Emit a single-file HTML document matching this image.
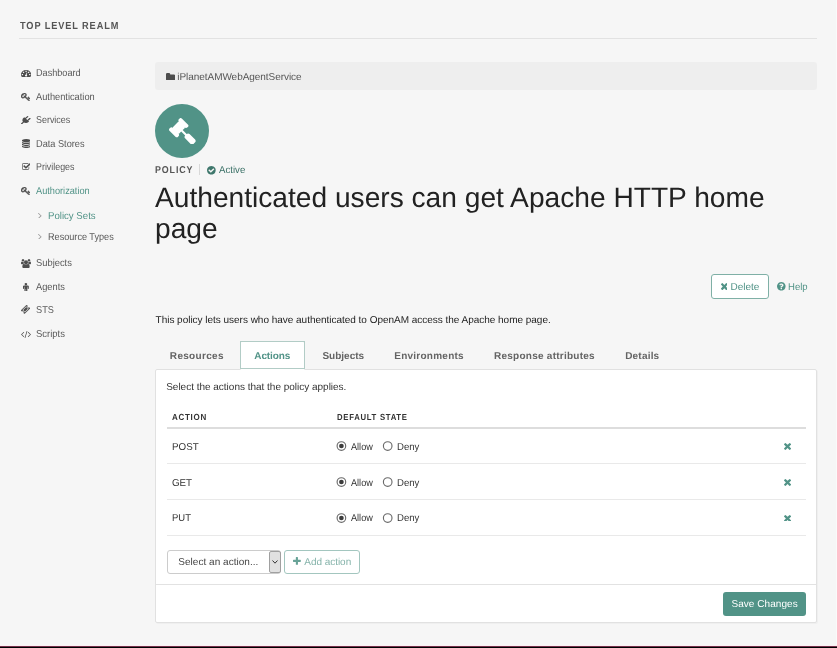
<!DOCTYPE html>
<html><head><meta charset="utf-8"><title>Policy</title>
<style>
*{box-sizing:border-box}
html,body{margin:0;padding:0}
body{width:837px;height:648px;overflow:hidden;background:#f6f6f6;font-family:"Liberation Sans",sans-serif;font-size:10px;color:#333;position:relative;text-rendering:geometricPrecision}
#page{position:absolute;left:0;top:0;width:837px;height:648px;overflow:hidden;will-change:transform}
.a{position:absolute}
.t{position:absolute;white-space:nowrap;line-height:1;transform-origin:0 0}
svg{position:absolute;display:block}
h1{margin:0;font-weight:normal}
a.t{text-decoration:none;cursor:pointer}
</style></head><body><div id="page">
<div class="a" style="left:19px;top:38px;width:798px;height:1px;background:#e2e2e2"></div>
<div class="a" style="left:155px;top:62px;width:662px;height:28px;background:#eeeeee;border-radius:3px"></div>
<div class="a" style="left:155.3px;top:104.2px;width:53.8px;height:53.8px;border-radius:50%;background:#519387"></div>
<div class="a" style="left:199.4px;top:164px;width:1px;height:11px;background:#d8d8d8"></div>
<div class="a" style="left:711px;top:274px;width:58px;height:25px;border:1px solid #7fb0a6;border-radius:3px;background:#fff"></div>
<div class="a" style="left:155px;top:369px;width:662px;height:254px;background:#fff;border:1px solid #e1e1e1;border-radius:2px;box-shadow:1px 1px 0 #efefef"></div>
<div class="a" style="left:240px;top:341px;width:65px;height:29px;border:1px solid #ddd;border-bottom:1px solid #fff;background:#fff;border-radius:2px 2px 0 0"></div>
<div class="a" style="left:240px;top:341px;width:65px;height:28px;border:1px solid #b2ccc6"></div>
<div class="a" style="left:166.5px;top:427px;width:639.5px;height:2px;background:#dddddd"></div>
<div class="a" style="left:166.5px;top:463.4px;width:639.5px;height:1px;background:#e9e9e9"></div>
<div class="a" style="left:166.5px;top:498.9px;width:639.5px;height:1px;background:#e9e9e9"></div>
<div class="a" style="left:166.5px;top:534.7px;width:639.5px;height:1px;background:#e9e9e9"></div>
<svg style="left:335px;top:439.4px;width:60px;height:14px" viewBox="0 0 60 14"><circle cx="6.4" cy="7" r="4.3" fill="#fff" stroke="#6a6a6a" stroke-width="1.15"/><circle cx="6.4" cy="7" r="2.35" fill="#3c3c3c"/><circle cx="52.7" cy="7" r="4.3" fill="#fff" stroke="#6a6a6a" stroke-width="1.15"/></svg>
<svg style="left:335px;top:475.1px;width:60px;height:14px" viewBox="0 0 60 14"><circle cx="6.4" cy="7" r="4.3" fill="#fff" stroke="#6a6a6a" stroke-width="1.15"/><circle cx="6.4" cy="7" r="2.35" fill="#3c3c3c"/><circle cx="52.7" cy="7" r="4.3" fill="#fff" stroke="#6a6a6a" stroke-width="1.15"/></svg>
<svg style="left:335px;top:510.8px;width:60px;height:14px" viewBox="0 0 60 14"><circle cx="6.4" cy="7" r="4.3" fill="#fff" stroke="#6a6a6a" stroke-width="1.15"/><circle cx="6.4" cy="7" r="2.35" fill="#3c3c3c"/><circle cx="52.7" cy="7" r="4.3" fill="#fff" stroke="#6a6a6a" stroke-width="1.15"/></svg>
<div class="a" style="left:166.5px;top:550px;width:114.5px;height:23.5px;border:1px solid #ccc;border-radius:3px;background:#fff"></div>
<div class="a" style="left:269px;top:550.5px;width:11.6px;height:22.4px;border:1px solid #a0a0a0;border-radius:2px;background:#e1e1e1"></div>
<svg style="left:271.8px;top:559.5px;width:6px;height:4px" viewBox="0 0 6 4"><path d="M0.5 0.5 L3 3.2 L5.5 0.5" fill="none" stroke="#333" stroke-width="1"/></svg>
<div class="a" style="left:284.3px;top:550px;width:75.7px;height:23.5px;border:1px solid #a3c6bf;border-radius:3px;background:#fff"></div>
<div class="a" style="left:156px;top:584px;width:660px;height:1px;background:#e2e2e2"></div>
<div class="a" style="left:723px;top:592px;width:83px;height:23.7px;background:#519387;border-radius:3px"></div>
<div class="a" style="left:836px;top:0;width:1px;height:645px;background:#fafafa"></div>
<div class="a" style="left:0;top:645px;width:837px;height:1px;background:#fbf1f4"></div>
<div class="a" style="left:0;top:646px;width:837px;height:1px;background:#74304a"></div>
<div class="a" style="left:0;top:647px;width:837px;height:1px;background:#000"></div>
<h1 class="a" style="left:155px;top:183.2px;width:662px;font-size:28.15px;line-height:30.4px;color:#222">Authenticated users can get Apache HTTP home page</h1>
<svg style="left:20.90px;top:69.80px;width:10.20px;height:7.20px" viewBox="0 256 1792 1408" preserveAspectRatio="none"><path fill="#4d4d4d" transform="translate(0,1536) scale(1,-1)" d="M384 384q0 53 -37.500 90.500t-90.500 37.500t-90.500 -37.500t-37.500 -90.500t37.500 -90.500t90.500 -37.500t90.500 37.500t37.500 90.500zM576 832q0 53 -37.500 90.500t-90.500 37.500t-90.500 -37.500t-37.500 -90.500t37.500 -90.500t90.500 -37.500t90.500 37.500t37.500 90.500zM1004 351l101 382 q6 26 -7.500 48.500t-38.500 29.500t-48 -6.500t-30 -39.500l-101 -382q-60 -5 -107 -43.500t-63 -98.500q-20 -77 20 -146t117 -89t146 20t89 117q16 60 -6 117t-72 91zM1664 384q0 53 -37.500 90.500t-90.500 37.500t-90.500 -37.500t-37.500 -90.500t37.500 -90.500t90.500 -37.500t90.500 37.500 t37.500 90.500zM1024 1024q0 53 -37.500 90.500t-90.500 37.500t-90.500 -37.500t-37.500 -90.500t37.500 -90.500t90.500 -37.500t90.500 37.500t37.500 90.500zM1472 832q0 53 -37.500 90.500t-90.500 37.500t-90.500 -37.500t-37.500 -90.500t37.500 -90.500t90.500 -37.500t90.500 37.500t37.500 90.500zM1792 384 q0 -261 -141 -483q-19 -29 -54 -29h-1402q-35 0 -54 29q-141 221 -141 483q0 182 71 348t191 286t286 191t348 71t348 -71t286 -191t191 -286t71 -348z"/></svg>
<svg style="left:21.10px;top:92.90px;width:9.10px;height:8.00px" viewBox="0 128 1683 1592" preserveAspectRatio="none"><path fill="#4d4d4d" stroke="#4d4d4d" stroke-width="70" transform="translate(0,1536) scale(1,-1)" d="M832 1024q0 80 -56 136t-136 56t-136 -56t-56 -136q0 -42 19 -83q-41 19 -83 19q-80 0 -136 -56t-56 -136t56 -136t136 -56t136 56t56 136q0 42 -19 83q41 -19 83 -19q80 0 136 56t56 136zM1683 320q0 -17 -49 -66t-66 -49q-9 0 -28.500 16t-36.500 33t-38.500 40t-24.500 26 l-96 -96l220 -220q28 -28 28 -68q0 -42 -39 -81t-81 -39q-40 0 -68 28l-671 671q-176 -131 -365 -131q-163 0 -265.500 102.500t-102.500 265.500q0 160 95 313t248 248t313 95q163 0 265.500 -102.500t102.500 -265.500q0 -189 -131 -365l355 -355l96 96q-3 3 -26 24.500t-40 38.500t-33 36.500 t-16 28.500q0 17 49 66t66 49q13 0 23 -10q6 -6 46 -44.500t82 -79.500t86.500 -86t73 -78t28.500 -41z"/></svg>
<svg style="left:21.20px;top:116.20px;width:9.60px;height:8.30px" viewBox="0 0 1792 1792" preserveAspectRatio="none"><path fill="#4d4d4d" transform="translate(0,1536) scale(1,-1)" d="M1755 1083q37 -38 37 -90.500t-37 -90.500l-401 -400l150 -150l-160 -160q-163 -163 -389.500 -186.500t-411.500 100.500l-362 -362h-181v181l362 362q-124 185 -100.500 411.500t186.500 389.500l160 160l150 -150l400 401q38 37 91 37t90 -37t37 -90.500t-37 -90.500l-400 -401l234 -234 l401 400q38 37 91 37t90 -37z"/></svg>
<svg style="left:21.50px;top:139.30px;width:8.50px;height:8.90px" viewBox="0 0 1536 1792" preserveAspectRatio="none"><path fill="#4d4d4d" transform="translate(0,1536) scale(1,-1)" d="M768 768q237 0 443 43t325 127v-170q0 -69 -103 -128t-280 -93.500t-385 -34.500t-385 34.500t-280 93.500t-103 128v170q119 -84 325 -127t443 -43zM768 0q237 0 443 43t325 127v-170q0 -69 -103 -128t-280 -93.500t-385 -34.500t-385 34.500t-280 93.500t-103 128v170q119 -84 325 -127 t443 -43zM768 384q237 0 443 43t325 127v-170q0 -69 -103 -128t-280 -93.500t-385 -34.500t-385 34.500t-280 93.500t-103 128v170q119 -84 325 -127t443 -43zM768 1536q208 0 385 -34.500t280 -93.500t103 -128v-128q0 -69 -103 -128t-280 -93.500t-385 -34.500t-385 34.500t-280 93.500 t-103 128v128q0 69 103 128t280 93.500t385 34.500z"/></svg>
<svg style="left:21.50px;top:163.00px;width:8.50px;height:7.00px" viewBox="0 128 1663 1408" preserveAspectRatio="none"><path fill="#4d4d4d" transform="translate(0,1536) scale(1,-1)" d="M1408 606v-318q0 -119 -84.500 -203.500t-203.500 -84.500h-832q-119 0 -203.500 84.500t-84.500 203.500v832q0 119 84.500 203.500t203.500 84.500h832q63 0 117 -25q15 -7 18 -23q3 -17 -9 -29l-49 -49q-10 -10 -23 -10q-3 0 -9 2q-23 6 -45 6h-832q-66 0 -113 -47t-47 -113v-832 q0 -66 47 -113t113 -47h832q66 0 113 47t47 113v254q0 13 9 22l64 64q10 10 23 10q6 0 12 -3q20 -8 20 -29zM1639 1095l-814 -814q-24 -24 -57 -24t-57 24l-430 430q-24 24 -24 57t24 57l110 110q24 24 57 24t57 -24l263 -263l647 647q24 24 57 24t57 -24l110 -110 q24 -24 24 -57t-24 -57z"/></svg>
<svg style="left:21.10px;top:186.70px;width:9.10px;height:8.00px" viewBox="0 128 1683 1592" preserveAspectRatio="none"><path fill="#4d4d4d" stroke="#4d4d4d" stroke-width="70" transform="translate(0,1536) scale(1,-1)" d="M832 1024q0 80 -56 136t-136 56t-136 -56t-56 -136q0 -42 19 -83q-41 19 -83 19q-80 0 -136 -56t-56 -136t56 -136t136 -56t136 56t56 136q0 42 -19 83q41 -19 83 -19q80 0 136 56t56 136zM1683 320q0 -17 -49 -66t-66 -49q-9 0 -28.500 16t-36.500 33t-38.500 40t-24.500 26 l-96 -96l220 -220q28 -28 28 -68q0 -42 -39 -81t-81 -39q-40 0 -68 28l-671 671q-176 -131 -365 -131q-163 0 -265.500 102.500t-102.500 265.500q0 160 95 313t248 248t313 95q163 0 265.500 -102.500t102.500 -265.500q0 -189 -131 -365l355 -355l96 96q-3 3 -26 24.500t-40 38.500t-33 36.500 t-16 28.500q0 17 49 66t66 49q13 0 23 -10q6 -6 46 -44.500t82 -79.500t86.500 -86t73 -78t28.500 -41z"/></svg>
<svg style="left:38.20px;top:212.50px;width:3.60px;height:5.70px" viewBox="13 461 582 998" preserveAspectRatio="none"><path fill="#999" transform="translate(0,1536) scale(1,-1)" d="M595 576q0 -13 -10 -23l-466 -466q-10 -10 -23 -10t-23 10l-50 50q-10 10 -10 23t10 23l393 393l-393 393q-10 10 -10 23t10 23l50 50q10 10 23 10t23 -10l466 -466q10 -10 10 -23z"/></svg>
<svg style="left:38.20px;top:233.60px;width:3.60px;height:5.70px" viewBox="13 461 582 998" preserveAspectRatio="none"><path fill="#999" transform="translate(0,1536) scale(1,-1)" d="M595 576q0 -13 -10 -23l-466 -466q-10 -10 -23 -10t-23 10l-50 50q-10 10 -10 23t10 23l393 393l-393 393q-10 10 -10 23t10 23l50 50q10 10 23 10t23 -10l466 -466q10 -10 10 -23z"/></svg>
<svg style="left:21.00px;top:258.50px;width:10.00px;height:9.10px" viewBox="0 0 1920 1792" preserveAspectRatio="none"><path fill="#4d4d4d" transform="translate(0,1536) scale(1,-1)" d="M593 640q-162 -5 -265 -128h-134q-82 0 -138 40.500t-56 118.500q0 353 124 353q6 0 43.500 -21t97.500 -42.500t119 -21.500q67 0 133 23q-5 -37 -5 -66q0 -139 81 -256zM1664 3q0 -120 -73 -189.500t-194 -69.500h-874q-121 0 -194 69.500t-73 189.500q0 53 3.500 103.500t14 109t26.500 108.500 t43 97.500t62 81t85.500 53.500t111.500 20q10 0 43 -21.500t73 -48t107 -48t135 -21.500t135 21.500t107 48t73 48t43 21.500q61 0 111.500 -20t85.500 -53.500t62 -81t43 -97.500t26.500 -108.500t14 -109t3.500 -103.500zM640 1280q0 -106 -75 -181t-181 -75t-181 75t-75 181t75 181t181 75t181 -75 t75 -181zM1344 896q0 -159 -112.500 -271.500t-271.500 -112.500t-271.500 112.500t-112.500 271.500t112.500 271.500t271.500 112.500t271.500 -112.500t112.500 -271.500zM1920 671q0 -78 -56 -118.500t-138 -40.500h-134q-103 123 -265 128q81 117 81 256q0 29 -5 66q66 -23 133 -23q59 0 119 21.500 t97.500 42.500t43.500 21q124 0 124 -353zM1792 1280q0 -106 -75 -181t-181 -75t-181 75t-75 181t75 181t181 75t181 -75t75 -181z"/></svg>
<svg style="left:23.20px;top:282.50px;width:5.80px;height:8.80px" viewBox="0 32 1024 1760" preserveAspectRatio="none"><path fill="#4d4d4d" transform="translate(0,1536) scale(1,-1)" d="M1024 832v-416q0 -40 -28 -68t-68 -28t-68 28t-28 68v352h-64v-912q0 -46 -33 -79t-79 -33t-79 33t-33 79v464h-64v-464q0 -46 -33 -79t-79 -33t-79 33t-33 79v912h-64v-352q0 -40 -28 -68t-68 -28t-68 28t-28 68v416q0 80 56 136t136 56h640q80 0 136 -56t56 -136z M736 1280q0 -93 -65.500 -158.500t-158.500 -65.500t-158.500 65.500t-65.500 158.500t65.500 158.500t158.500 65.500t158.500 -65.500t65.500 -158.500z"/></svg>
<svg style="left:21.40px;top:305.40px;width:9.10px;height:8.80px" viewBox="54 7 1685 1685" preserveAspectRatio="none"><path fill="#4d4d4d" transform="translate(0,1536) scale(1,-1)" d="M1024 1131l316 -316l-572 -572l-316 316zM813 153l618 618q19 19 19 45t-19 45l-362 362q-18 18 -45 18t-45 -18l-618 -618q-19 -19 -19 -45t19 -45l362 -362q18 -18 45 -18t45 18zM1702 789l-907 -908q-37 -37 -90.500 -37t-90.500 37l-126 126q56 56 56 136t-56 136t-136 56 t-136 -56l-125 126q-37 37 -37 90.500t37 90.500l907 906q37 37 90.500 37t90.500 -37l125 -125q-56 -56 -56 -136t56 -136t136 -56t136 56l126 -125q37 -37 37 -90.500t-37 -90.500z"/></svg>
<svg style="left:21.00px;top:330.60px;width:10.00px;height:7.00px" viewBox="45 273.476 1830 1373.05" preserveAspectRatio="none"><path fill="#4d4d4d" transform="translate(0,1536) scale(1,-1)" d="M617 137l-50 -50q-10 -10 -23 -10t-23 10l-466 466q-10 10 -10 23t10 23l466 466q10 10 23 10t23 -10l50 -50q10 -10 10 -23t-10 -23l-393 -393l393 -393q10 -10 10 -23t-10 -23zM1208 1204l-373 -1291q-4 -13 -15.500 -19.500t-23.500 -2.500l-62 17q-13 4 -19.500 15.500t-2.500 24.500 l373 1291q4 13 15.500 19.500t23.500 2.500l62 -17q13 -4 19.500 -15.500t2.500 -24.500zM1865 553l-466 -466q-10 -10 -23 -10t-23 10l-50 50q-10 10 -10 23t10 23l393 393l-393 393q-10 10 -10 23t10 23l50 50q10 10 23 10t23 -10l466 -466q10 -10 10 -23t-10 -23z"/></svg>
<svg style="left:166.10px;top:72.80px;width:9.10px;height:7.60px" viewBox="0 128 1664 1408" preserveAspectRatio="none"><path fill="#4d4d4d" transform="translate(0,1536) scale(1,-1)" d="M1664 928v-704q0 -92 -66 -158t-158 -66h-1216q-92 0 -158 66t-66 158v960q0 92 66 158t158 66h320q92 0 158 -66t66 -158v-32h672q92 0 158 -66t66 -158z"/></svg>
<svg style="left:168.90px;top:117.90px;width:26.70px;height:26.50px" viewBox="40 40 1731 1731" preserveAspectRatio="none"><path fill="#fff" transform="translate(0,1536) scale(1,-1)" d="M1771 0q0 -53 -37 -90l-107 -108q-39 -37 -91 -37q-53 0 -90 37l-363 364q-38 36 -38 90q0 53 43 96l-256 256l-126 -126q-14 -14 -34 -14t-34 14q2 -2 12.5 -12t12.5 -13t10 -11.5t10 -13.5t6 -13.5t5.500 -16.500t1.500 -18q0 -38 -28 -68q-3 -3 -16.500 -18t-19 -20.500 t-18.500 -16.500t-22 -15.500t-22 -9t-26 -4.500q-40 0 -68 28l-408 408q-28 28 -28 68q0 13 4.500 26t9 22t15.500 22t16.500 18.500t20.500 19t18 16.500q30 28 68 28q10 0 18 -1.500t16.500 -5.500t13.500 -6t13.500 -10t11.500 -10t13 -12.500t12 -12.500q-14 14 -14 34t14 34l348 348 q14 14 34 14t34 -14q-2 2 -12.500 12t-12.500 13t-10 11.500t-10 13.500t-6 13.500t-5.500 16.500t-1.500 18q0 38 28 68q3 3 16.500 18t19 20.500t18.500 16.500t22 15.500t22 9t26 4.500q40 0 68 -28l408 -408q28 -28 28 -68q0 -13 -4.500 -26t-9 -22t-15.500 -22t-16.500 -18.500t-20.500 -19 t-18 -16.500q-30 -28 -68 -28q-10 0 -18 1.500t-16.500 5.500t-13.500 6t-13.500 10t-11.500 10t-13 12.500t-12 12.500q14 -14 14 -34t-14 -34l-126 -126l256 -256q43 43 96 43q52 0 91 -37l363 -363q37 -39 37 -91z"/></svg>
<svg style="left:207.30px;top:166.00px;width:8.70px;height:8.50px" viewBox="0 128 1536 1536" preserveAspectRatio="none"><path fill="#3f776c" transform="translate(0,1536) scale(1,-1)" d="M1284 802q0 28 -18 46l-91 90q-19 19 -45 19t-45 -19l-408 -407l-226 226q-19 19 -45 19t-45 -19l-91 -90q-18 -18 -18 -46q0 -27 18 -45l362 -362q19 -19 45 -19q27 0 46 19l543 543q18 18 18 45zM1536 640q0 -209 -103 -385.5t-279.5 -279.5t-385.5 -103t-385.5 103 t-279.5 279.5t-103 385.5t103 385.5t279.5 279.5t385.5 103t385.5 -103t279.5 -279.5t103 -385.5z"/></svg>
<svg style="left:720.50px;top:283.40px;width:6.70px;height:7.10px" viewBox="110 366 1188 1188" preserveAspectRatio="none"><path fill="#519387" transform="translate(0,1536) scale(1,-1)" d="M1298 214q0 -40 -28 -68l-136 -136q-28 -28 -68 -28t-68 28l-294 294l-294 -294q-28 -28 -68 -28t-68 28l-136 136q-28 28 -28 68t28 68l294 294l-294 294q-28 28 -28 68t28 68l136 136q28 28 68 28t68 -28l294 -294l294 294q28 28 68 28t68 -28l136 -136q28 -28 28 -68 t-28 -68l-294 -294l294 -294q28 -28 28 -68z"/></svg>
<svg style="left:777.40px;top:282.20px;width:8.60px;height:8.60px" viewBox="0 128 1536 1536" preserveAspectRatio="none"><path fill="#519387" transform="translate(0,1536) scale(1,-1)" d="M896 160v192q0 14 -9 23t-23 9h-192q-14 0 -23 -9t-9 -23v-192q0 -14 9 -23t23 -9h192q14 0 23 9t9 23zM1152 832q0 88 -55.5 163t-138.5 116t-170 41q-243 0 -371 -213q-15 -24 8 -42l132 -100q7 -6 19 -6q16 0 25 12q53 68 86 92q34 24 86 24q48 0 85.500 -26t37.500 -59 q0 -38 -20 -61t-68 -45q-63 -28 -115.500 -86.500t-52.500 -125.500v-36q0 -14 9 -23t23 -9h192q14 0 23 9t9 23q0 19 21.500 49.500t54.500 49.500q32 18 49 28.500t46 35t44.500 48t28 60.500t12.500 81zM1536 640q0 -209 -103 -385.5t-279.5 -279.5t-385.5 -103t-385.5 103t-279.5 279.5 t-103 385.5t103 385.5t279.5 279.5t385.5 103t385.5 -103t279.5 -279.5t103 -385.5z"/></svg>
<svg style="left:784.20px;top:443.10px;width:7.10px;height:6.90px" viewBox="110 366 1188 1188" preserveAspectRatio="none"><path fill="#519387" transform="translate(0,1536) scale(1,-1)" d="M1298 214q0 -40 -28 -68l-136 -136q-28 -28 -68 -28t-68 28l-294 294l-294 -294q-28 -28 -68 -28t-68 28l-136 136q-28 28 -28 68t28 68l294 294l-294 294q-28 28 -28 68t28 68l136 136q28 28 68 28t68 -28l294 -294l294 294q28 28 68 28t68 -28l136 -136q28 -28 28 -68 t-28 -68l-294 -294l294 -294q28 -28 28 -68z"/></svg>
<svg style="left:784.20px;top:478.80px;width:7.10px;height:6.90px" viewBox="110 366 1188 1188" preserveAspectRatio="none"><path fill="#519387" transform="translate(0,1536) scale(1,-1)" d="M1298 214q0 -40 -28 -68l-136 -136q-28 -28 -68 -28t-68 28l-294 294l-294 -294q-28 -28 -68 -28t-68 28l-136 136q-28 28 -28 68t28 68l294 294l-294 294q-28 28 -28 68t28 68l136 136q28 28 68 28t68 -28l294 -294l294 294q28 28 68 28t68 -28l136 -136q28 -28 28 -68 t-28 -68l-294 -294l294 -294q28 -28 28 -68z"/></svg>
<svg style="left:784.20px;top:514.50px;width:7.10px;height:6.90px" viewBox="110 366 1188 1188" preserveAspectRatio="none"><path fill="#519387" transform="translate(0,1536) scale(1,-1)" d="M1298 214q0 -40 -28 -68l-136 -136q-28 -28 -68 -28t-68 28l-294 294l-294 -294q-28 -28 -68 -28t-68 28l-136 136q-28 28 -28 68t28 68l294 294l-294 294q-28 28 -28 68t28 68l136 136q28 28 68 28t68 -28l294 -294l294 294q28 28 68 28t68 -28l136 -136q28 -28 28 -68 t-28 -68l-294 -294l294 -294q28 -28 28 -68z"/></svg>
<svg style="left:293.30px;top:557.40px;width:7.80px;height:7.80px" viewBox="0 128 1408 1408" preserveAspectRatio="none"><path fill="#68a397" transform="translate(0,1536) scale(1,-1)" d="M1408 800v-192q0 -40 -28 -68t-68 -28h-416v-416q0 -40 -28 -68t-68 -28h-192q-40 0 -68 28t-28 68v416h-416q-40 0 -68 28t-28 68v192q0 40 28 68t68 28h416v416q0 40 28 68t68 28h192q40 0 68 -28t28 -68v-416h416q40 0 68 -28t28 -68z"/></svg>
<span class="t" style="left:20.10px;top:22.00px;font-size:10.3px;color:#555;font-weight:700;letter-spacing:1.000px;transform:scaleX(0.8932)">TOP LEVEL REALM</span>
<a class="t" style="left:35.82px;top:69.00px;font-size:10px;color:#585858;transform:scaleX(0.9116)">Dashboard</a>
<a class="t" style="left:36.20px;top:93.00px;font-size:10px;color:#585858;transform:scaleX(0.9259)">Authentication</a>
<a class="t" style="left:36.25px;top:116.00px;font-size:10px;color:#585858;transform:scaleX(0.8933)">Services</a>
<a class="t" style="left:36.01px;top:140.00px;font-size:10px;color:#585858;transform:scaleX(0.9198)">Data Stores</a>
<a class="t" style="left:36.33px;top:163.00px;font-size:10px;color:#585858;transform:scaleX(0.8876)">Privileges</a>
<a class="t" style="left:36.20px;top:187.00px;font-size:10px;color:#519387;transform:scaleX(0.9195)">Authorization</a>
<a class="t" style="left:48.28px;top:212.00px;font-size:10px;color:#519387;transform:scaleX(0.9629)">Policy Sets</a>
<a class="t" style="left:48.32px;top:233.00px;font-size:10px;color:#585858;transform:scaleX(0.9113)">Resource Types</a>
<a class="t" style="left:36.23px;top:259.00px;font-size:10px;color:#585858;transform:scaleX(0.9360)">Subjects</a>
<a class="t" style="left:36.40px;top:283.00px;font-size:10px;color:#585858;transform:scaleX(0.9268)">Agents</a>
<a class="t" style="left:36.24px;top:306.00px;font-size:10px;color:#585858;transform:scaleX(0.9189)">STS</a>
<a class="t" style="left:36.23px;top:330.00px;font-size:10px;color:#585858;transform:scaleX(0.9479)">Scripts</a>
<span class="t" style="left:177.25px;top:73.00px;font-size:10px;color:#555;letter-spacing:-0.046px">iPlanetAMWebAgentService</span>
<span class="t" style="left:155.33px;top:166.00px;font-size:10px;color:#555;font-weight:700;letter-spacing:1.000px;transform:scaleX(0.8873)">POLICY</span>
<span class="t" style="left:218.80px;top:166.00px;font-size:10px;color:#3a7066;transform:scaleX(0.9645)">Active</span>
<a class="t" style="left:730.55px;top:283.00px;font-size:10px;color:#519387;letter-spacing:-0.050px">Delete</a>
<a class="t" style="left:788.48px;top:283.00px;font-size:10px;color:#519387;transform:scaleX(0.9538)">Help</a>
<span class="t" style="left:155.55px;top:316.00px;font-size:10px;color:#222;letter-spacing:-0.021px">This policy lets users who have authenticated to OpenAM access the Apache home page.</span>
<a class="t" style="left:169.85px;top:352.00px;font-size:10px;color:#646464;font-weight:700;letter-spacing:0.312px">Resources</a>
<a class="t" style="left:254.25px;top:352.00px;font-size:10px;color:#519387;font-weight:700;letter-spacing:-0.083px">Actions</a>
<a class="t" style="left:322.45px;top:352.00px;font-size:10px;color:#646464;font-weight:700">Subjects</a>
<a class="t" style="left:394.25px;top:352.00px;font-size:10px;color:#646464;font-weight:700;letter-spacing:0.245px">Environments</a>
<a class="t" style="left:493.95px;top:352.00px;font-size:10px;color:#646464;font-weight:700;letter-spacing:0.256px">Response attributes</a>
<a class="t" style="left:625.15px;top:352.00px;font-size:10px;color:#646464;font-weight:700;letter-spacing:0.208px">Details</a>
<span class="t" style="left:166.20px;top:383.00px;font-size:10px;color:#333;letter-spacing:-0.011px">Select the actions that the policy applies.</span>
<span class="t" style="left:172.17px;top:413.00px;font-size:8.8px;color:#333;font-weight:700;letter-spacing:0.800px;transform:scaleX(0.9081)">ACTION</span>
<span class="t" style="left:336.86px;top:413.00px;font-size:8.8px;color:#333;font-weight:700;letter-spacing:0.800px;transform:scaleX(0.8800)">DEFAULT STATE</span>
<span class="t" style="left:171.77px;top:443.00px;font-size:10px;color:#333;transform:scaleX(0.9790)">POST</span>
<span class="t" style="left:351.10px;top:443.00px;font-size:10px;color:#333;transform:scaleX(0.9125)">Allow</span>
<span class="t" style="left:397.38px;top:443.00px;font-size:10px;color:#333;transform:scaleX(0.9556)">Deny</span>
<span class="t" style="left:172.01px;top:479.00px;font-size:10px;color:#333;transform:scaleX(0.9772)">GET</span>
<span class="t" style="left:351.10px;top:479.00px;font-size:10px;color:#333;transform:scaleX(0.9125)">Allow</span>
<span class="t" style="left:397.38px;top:479.00px;font-size:10px;color:#333;transform:scaleX(0.9556)">Deny</span>
<span class="t" style="left:171.79px;top:514.00px;font-size:10px;color:#333;transform:scaleX(0.9474)">PUT</span>
<span class="t" style="left:351.10px;top:514.00px;font-size:10px;color:#333;transform:scaleX(0.9125)">Allow</span>
<span class="t" style="left:397.38px;top:514.00px;font-size:10px;color:#333;transform:scaleX(0.9556)">Deny</span>
<span class="t" style="left:178.30px;top:558.00px;font-size:10px;color:#444;letter-spacing:0.028px">Select an action...</span>
<a class="t" style="left:304.30px;top:558.00px;font-size:10px;color:#85b3aa;letter-spacing:-0.039px">Add action</a>
<a class="t" style="left:731.40px;top:600.00px;font-size:10px;color:#fff;letter-spacing:0.068px">Save Changes</a>
</div></body></html>
